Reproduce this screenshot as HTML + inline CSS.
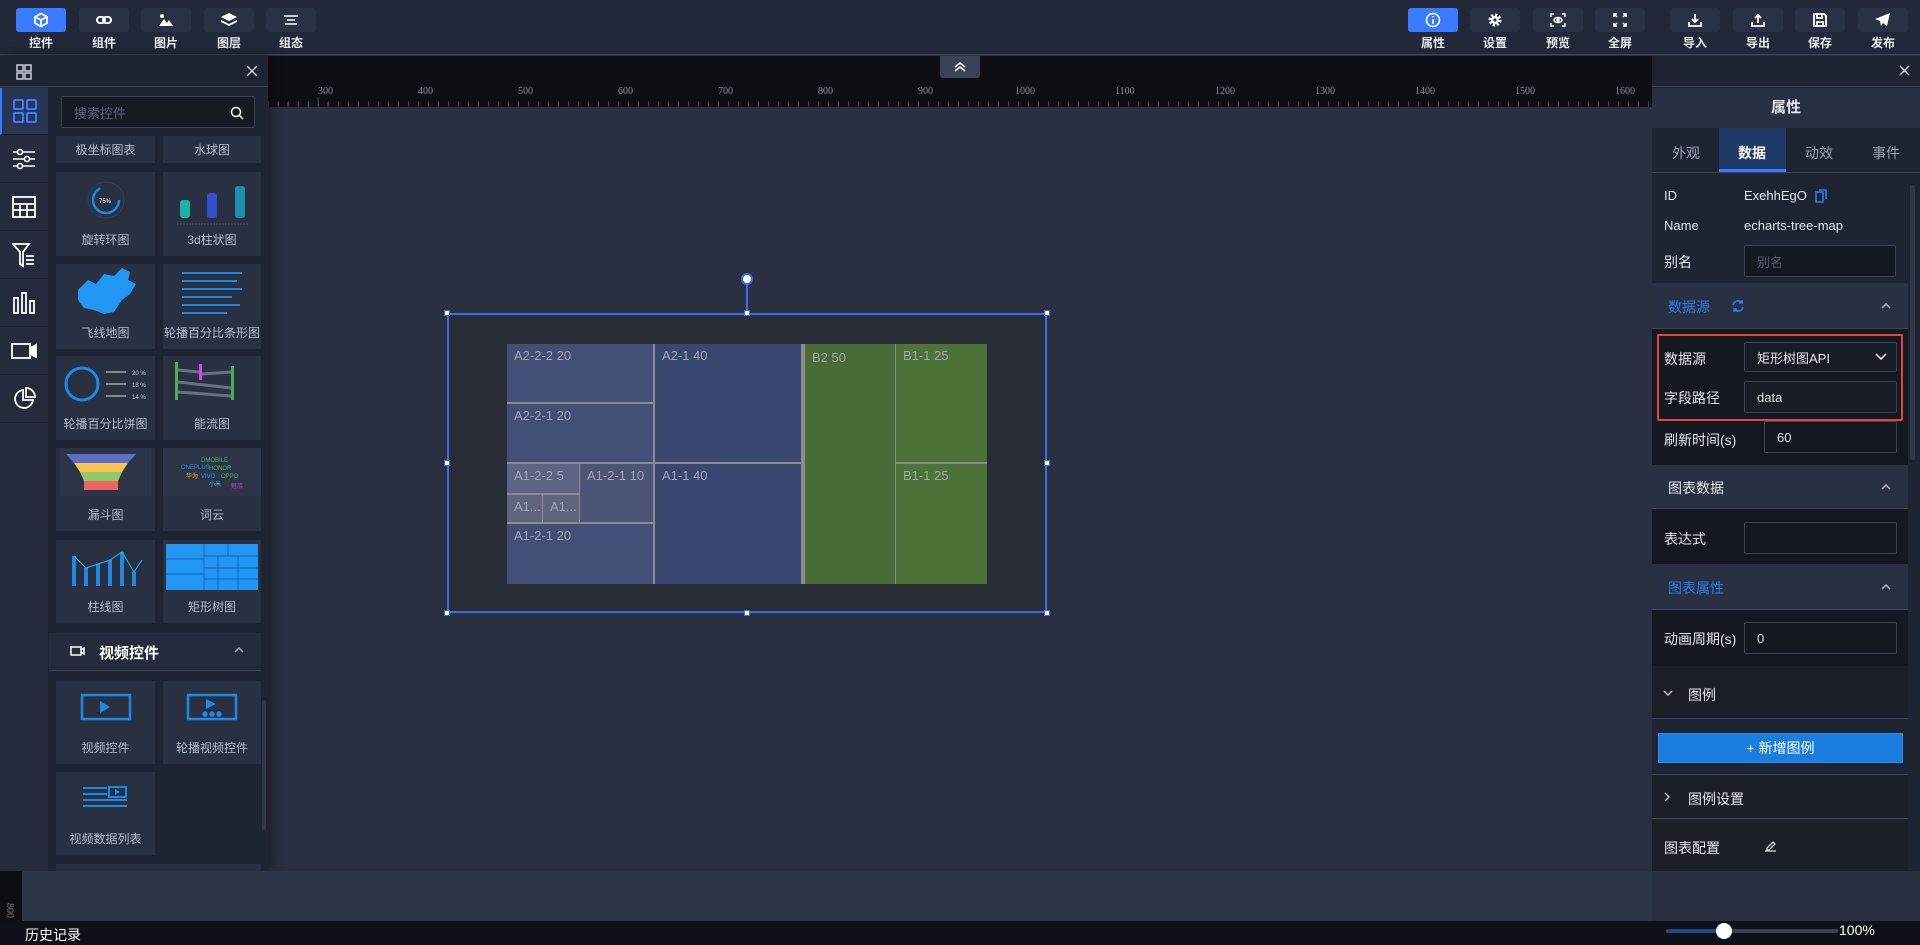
<!DOCTYPE html>
<html><head><meta charset="utf-8"><style>
*{margin:0;padding:0;box-sizing:border-box}
body{width:1920px;height:945px;overflow:hidden;background:#2a3040;font-family:"Liberation Sans","Noto Sans CJK SC",sans-serif;color:#e6e8ee;position:relative}
.a{position:absolute}
.tb{position:absolute;top:8px;width:50px;height:24px;background:#2a3142;border-radius:3px;display:flex;align-items:center;justify-content:center}
.tb.on{background:#3a7afe}
.tl{position:absolute;top:34px;width:50px;text-align:center;font-size:12px;color:#e8eaf0;font-weight:bold}
.ic{position:absolute;left:0;width:48px;height:47px;border-bottom:1px solid #1a1f2b;display:flex;align-items:center;justify-content:center}
.card{position:absolute;background:#283042;font-size:12px;color:#b4bccb;text-align:center}
.card span{position:absolute;left:0;right:0;bottom:8px}
.lab{position:absolute;font-size:13px;color:#e6e8ee}
.inp{position:absolute;background:#141821;border:1px solid #3a4254;border-radius:2px;font-size:13px;color:#e6e8ee;padding-left:12px;display:flex;align-items:center}
.sec{position:absolute;left:1652px;width:256px;background:#283042;border-bottom:1px solid #3a4254}
.tm{position:absolute;font-size:13px;color:#a3a7b0;padding:4px 0 0 7px;border:1px solid #8c8c8c;overflow:hidden;white-space:nowrap}
.h{position:absolute;width:6px;height:6px;background:#fff;border:1px solid #3a6cf0}
.rn{position:absolute;top:86px;font-size:10px;color:#8a8f99;font-family:"Liberation Serif",serif}
</style></head><body>
<!-- top bar -->
<div class="a" style="left:0;top:0;width:1920px;height:55px;background:#222838;border-bottom:1px solid #3a4254"></div>
<div class="tb on" style="left:16px"><svg width="16" height="16" viewBox="0 0 16 16" fill="none" stroke="#fff" stroke-width="1.8"><path d="M8 1.5 14 4.8v6.4L8 14.5 2 11.2V4.8z M2 4.8 8 8l6-3.2M8 8v6.5"/></svg></div><div class="tl" style="left:16px">控件</div>
<div class="tb" style="left:79px"><svg width="16" height="10" viewBox="0 0 16 10" fill="none" stroke="#fff" stroke-width="2"><rect x="1" y="2" width="8" height="6" rx="3"/><rect x="7" y="2" width="8" height="6" rx="3"/></svg></div><div class="tl" style="left:79px">组件</div>
<div class="tb" style="left:141px"><svg width="16" height="14" viewBox="0 0 16 14" fill="#fff"><circle cx="4" cy="3" r="2"/><path d="M1 13 6 6l3 4 2-3 4 6z"/></svg></div><div class="tl" style="left:141px">图片</div>
<div class="tb" style="left:204px"><svg width="16" height="14" viewBox="0 0 16 14" fill="#fff"><path d="M8 0 16 4 8 8 0 4z"/><path d="M0 7l8 4 8-4v2l-8 4-8-4z"/></svg></div><div class="tl" style="left:204px">图层</div>
<div class="tb" style="left:266px"><svg width="14" height="10" viewBox="0 0 14 10" stroke="#fff" stroke-width="1.6"><path d="M0 1h14M3 5h8M1 9h12"/></svg></div><div class="tl" style="left:266px">组态</div>
<div class="tb on" style="left:1408px"><svg width="16" height="16" viewBox="0 0 16 16" fill="none" stroke="#fff" stroke-width="1.6"><circle cx="8" cy="8" r="6.5"/><path d="M8 7v5M8 4v1.2"/></svg></div><div class="tl" style="left:1408px">属性</div>
<div class="tb" style="left:1470px"><svg width="14" height="14" viewBox="0 0 14 14"><circle cx="7" cy="7" r="5" fill="none" stroke="#fff" stroke-width="3" stroke-dasharray="2.2 1.7"/><circle cx="7" cy="7" r="4" fill="#fff"/><circle cx="7" cy="7" r="1.6" fill="#2a3142"/></svg></div><div class="tl" style="left:1470px">设置</div>
<div class="tb" style="left:1533px"><svg width="16" height="14" viewBox="0 0 16 14" fill="none" stroke="#fff" stroke-width="1.5"><path d="M1 4V1h3M12 1h3v3M15 10v3h-3M4 13H1v-3"/><ellipse cx="8" cy="7" rx="4" ry="2.5"/><circle cx="8" cy="7" r="1" fill="#fff"/></svg></div><div class="tl" style="left:1533px">预览</div>
<div class="tb" style="left:1595px"><svg width="14" height="14" viewBox="0 0 14 14" fill="none" stroke="#fff" stroke-width="1.5"><path d="M1 4V1h3M1 1l3 3M10 1h3v3M13 1l-3 3M13 10v3h-3M13 13l-3-3M4 13H1v-3M1 13l3-3"/></svg></div><div class="tl" style="left:1595px">全屏</div>
<div class="tb" style="left:1670px"><svg width="14" height="14" viewBox="0 0 14 14" fill="none" stroke="#fff" stroke-width="1.8"><path d="M7 1v8M4 6l3 3 3-3M1 9v4h12V9"/></svg></div><div class="tl" style="left:1670px">导入</div>
<div class="tb" style="left:1733px"><svg width="14" height="14" viewBox="0 0 14 14" fill="none" stroke="#fff" stroke-width="1.8"><path d="M7 10V2M4 5l3-3 3 3M1 9v4h12V9"/></svg></div><div class="tl" style="left:1733px">导出</div>
<div class="tb" style="left:1795px"><svg width="14" height="14" viewBox="0 0 14 14" fill="none" stroke="#fff" stroke-width="1.8"><path d="M1 1h10l2 2v10H1z M4 1v4h5V1M4 13V9h6v4"/></svg></div><div class="tl" style="left:1795px">保存</div>
<div class="tb" style="left:1858px"><svg width="16" height="14" viewBox="0 0 16 14" fill="#fff"><path d="M15 0 0 6l5 2 1 5 2-3 4 3z"/></svg></div><div class="tl" style="left:1858px">发布</div>

<!-- ruler -->
<div class="a" style="left:268px;top:56px;width:1384px;height:51px;background:#0d0f15"></div>
<svg class="a" style="left:268px;top:97px" width="1384" height="10"><g stroke="#444a55" stroke-width="1">
<path d="M0 5v5M10 5v5M20 5v5M30 5v5M40 5v5M50 0v10M60 5v5"/></g>
<rect x="0" y="4" width="1384" height="6" fill="url(#tk)"/><defs><pattern id="tk" width="10" height="6" patternUnits="userSpaceOnUse"><rect x="0" y="0" width="1" height="6" fill="#3a3f49"/></pattern></defs></svg>
<div class="rn" style="left:318px">300</div><div class="rn" style="left:418px">400</div><div class="rn" style="left:518px">500</div><div class="rn" style="left:618px">600</div><div class="rn" style="left:718px">700</div><div class="rn" style="left:818px">800</div><div class="rn" style="left:918px">900</div><div class="rn" style="left:1015px">1000</div><div class="rn" style="left:1115px">1100</div><div class="rn" style="left:1215px">1200</div><div class="rn" style="left:1315px">1300</div><div class="rn" style="left:1415px">1400</div><div class="rn" style="left:1515px">1500</div><div class="rn" style="left:1615px">1600</div>
<div class="a" style="left:940px;top:56px;width:40px;height:22px;background:#3a4254;border-radius:0 0 3px 3px;display:flex;align-items:center;justify-content:center"><svg width="12" height="10" fill="none" stroke="#fff" stroke-width="1.5"><path d="M1 5l5-4 5 4M1 9l5-4 5 4"/></svg></div>

<!-- canvas selection and treemap -->
<div class="a" style="left:447px;top:313px;width:600px;height:300px;background:#282c36;border:2px solid #3a6cf0"></div>
<div class="a" style="left:746px;top:279px;width:2px;height:34px;background:#3a6cf0"></div>
<div class="a" style="left:741px;top:273px;width:12px;height:12px;border-radius:50%;background:#fff;border:2px solid #3a6cf0"></div>
<div class="h" style="left:444px;top:310px"></div><div class="h" style="left:744px;top:310px"></div><div class="h" style="left:1044px;top:310px"></div>
<div class="h" style="left:444px;top:460px"></div><div class="h" style="left:1044px;top:460px"></div>
<div class="h" style="left:444px;top:610px"></div><div class="h" style="left:744px;top:610px"></div><div class="h" style="left:1044px;top:610px"></div>
<div class="tm" style="left:507px;top:344px;width:147px;height:60px;background:#434f76;border-width:0 1px 2px 0">A2-2-2 20</div>
<div class="tm" style="left:507px;top:404px;width:147px;height:60px;background:#434f76;border-width:0 1px 2px 0">A2-2-1 20</div>
<div class="tm" style="left:507px;top:464px;width:73px;height:31px;background:#5c6384;border-width:0 1px 2px 0">A1-2-2 5</div>
<div class="tm" style="left:507px;top:495px;width:36px;height:29px;background:#60657f;border-width:0 1px 2px 0">A1...</div>
<div class="tm" style="left:543px;top:495px;width:37px;height:29px;background:#60657f;border-width:0 1px 2px 0">A1...</div>
<div class="tm" style="left:580px;top:464px;width:74px;height:60px;background:#4c5477;border-width:0 1px 2px 0">A1-2-1 10</div>
<div class="tm" style="left:507px;top:524px;width:147px;height:60px;background:#434f76;border-width:0 1px 0 0">A1-2-1 20</div>
<div class="tm" style="left:654px;top:344px;width:147px;height:120px;background:#3a4770;border-width:0 0 2px 1px">A2-1 40</div>
<div class="tm" style="left:654px;top:464px;width:147px;height:120px;background:#3a4770;border-width:0 0 0 1px">A1-1 40</div>
<div class="a" style="left:801px;top:344px;width:4px;height:240px;background:#8c8c8c"></div>
<div class="tm" style="left:805px;top:344px;width:91px;height:240px;background:#496b35;border-width:0 1px 0 0;padding-top:6px">B2 50</div>
<div class="tm" style="left:896px;top:344px;width:91px;height:120px;background:#4e7339;border-width:0 0 2px 0">B1-1 25</div>
<div class="tm" style="left:896px;top:464px;width:91px;height:120px;background:#4e7339;border-width:0">B1-1 25</div>

<!-- left panel -->
<div class="a" style="left:0;top:56px;width:268px;height:815px;background:#1f2433;box-shadow:4px 0 12px rgba(0,0,0,.4)"></div>
<div class="a" style="left:0;top:56px;width:268px;height:31px;border-bottom:1px solid #3a4254"></div>
<svg class="a" style="left:16px;top:64px" width="16" height="16" fill="none" stroke="#d8dbe2" stroke-width="1.4"><rect x="1" y="1" width="6" height="6"/><rect x="9" y="1" width="6" height="6"/><rect x="1" y="9" width="6" height="6"/><rect x="9" y="9" width="6" height="6"/></svg>
<svg class="a" style="left:246px;top:65px" width="12" height="12" stroke="#d8dbe2" stroke-width="1.4"><path d="M1 1l10 10M11 1 1 11"/></svg>
<div class="a" style="left:0;top:87px;width:48px;height:784px;background:#252b3b"></div>
<div class="ic" style="top:88px;background:#2a3550;border-left:2px solid #3a7afe"><svg width="24" height="24" fill="none" stroke="#3a7afe" stroke-width="2"><rect x="1" y="1" width="9" height="9" rx="1"/><rect x="14" y="1" width="9" height="9" rx="1"/><rect x="1" y="14" width="9" height="9" rx="1"/><rect x="14" y="14" width="9" height="9" rx="1"/></svg></div>
<div class="ic" style="top:136px"><svg width="24" height="22" fill="none" stroke="#fff" stroke-width="1.6"><path d="M1 4h22M1 11h22M1 18h22"/><circle cx="8" cy="4" r="2.5" fill="#252b3b"/><circle cx="15" cy="11" r="2.5" fill="#252b3b"/><circle cx="8" cy="18" r="2.5" fill="#252b3b"/></svg></div>
<div class="ic" style="top:184px"><svg width="24" height="22" fill="none" stroke="#fff" stroke-width="1.8"><rect x="1" y="1" width="22" height="20"/><path d="M1 8h22M1 14h22M8 8v13M15 8v13"/></svg></div>
<div class="ic" style="top:232px"><svg width="24" height="26" fill="none" stroke="#fff" stroke-width="1.8"><path d="M1 2h16l-6 8v14l-3-2V10z M14 14h8M14 18h8M14 22h8"/></svg></div>
<div class="ic" style="top:280px"><svg width="24" height="22" fill="none" stroke="#fff" stroke-width="1.8"><rect x="2" y="6" width="4" height="15"/><rect x="10" y="1" width="4" height="20"/><rect x="18" y="9" width="4" height="12"/></svg></div>
<div class="ic" style="top:328px"><svg width="26" height="16" fill="none" stroke="#fff" stroke-width="1.8"><rect x="1" y="1" width="18" height="14"/><path d="M19 5l6-3v12l-6-3" fill="#fff"/></svg></div>
<div class="ic" style="top:376px"><svg width="24" height="24" fill="none" stroke="#fff" stroke-width="1.8"><path d="M11 3a9 9 0 1 0 10 10H11z M14 1v9h9a9 9 0 0 0-9-9z"/></svg></div>
<div class="a" style="left:48px;top:87px;width:220px;height:784px;background:#1f2433"></div>
<div class="inp" style="left:61px;top:96px;width:194px;height:32px;color:#5a6275;background:#161a24">搜索控件
<svg class="a" style="right:10px;top:9px" width="14" height="14" fill="none" stroke="#fff" stroke-width="1.5"><circle cx="6" cy="6" r="4.5"/><path d="M9.5 9.5l3.5 3.5"/></svg></div>
<div class="card" style="left:56px;top:136px;width:99px;height:27px"><span style="bottom:5px">极坐标图表</span></div>
<div class="card" style="left:163px;top:136px;width:98px;height:27px"><span style="bottom:5px">水球图</span></div>
<div class="card" style="left:56px;top:172px;width:99px;height:84px"><svg class="a" style="left:30px;top:8px" width="40" height="40" fill="none"><circle cx="20" cy="20" r="18" stroke="#344055"/><circle cx="20" cy="20" r="13" stroke="#1e88e5" stroke-width="2.5" stroke-dasharray="55 30"/><text x="13" y="23" font-size="6" fill="#fff" stroke="none">75%</text></svg><span>旋转环图</span></div>
<div class="card" style="left:163px;top:172px;width:98px;height:84px"><svg class="a" style="left:12px;top:8px" width="76" height="46"><rect x="5" y="20" width="10" height="18" rx="3" fill="#1ab3a0"/><rect x="32" y="13" width="10" height="25" rx="3" fill="#3450c8"/><rect x="60" y="6" width="10" height="32" rx="3" fill="#1c8fb0"/><path d="M2 44h72" stroke="#556" stroke-dasharray="2 1"/></svg><span>3d柱状图</span></div>
<div class="card" style="left:56px;top:264px;width:99px;height:85px"><svg class="a" style="left:18px;top:2px" width="66" height="56"><path d="M4 24 14 14 22 18 30 8 40 10 48 2 56 6 54 14 62 18 56 28 48 34 40 46 30 48 20 44 10 42 4 34z" fill="#2196f3"/></svg><span>飞线地图</span></div>
<div class="card" style="left:163px;top:264px;width:98px;height:85px"><svg class="a" style="left:4px;top:5px" width="90" height="50" stroke="#1e88e5" stroke-width="2"><path d="M15 4h60M15 12h55M15 20h60M15 28h50M15 36h58M15 44h45"/></svg><span>轮播百分比条形图</span></div>
<div class="card" style="left:56px;top:356px;width:99px;height:84px"><svg class="a" style="left:6px;top:6px" width="88" height="44"><circle cx="20" cy="22" r="16" fill="none" stroke="#1e88e5" stroke-width="3"/><path d="M44 10h20M44 22h20M44 34h20" stroke="#888" stroke-width="2"/><text x="70" y="13" font-size="6" fill="#ccc">20 %</text><text x="70" y="25" font-size="6" fill="#ccc">18 %</text><text x="70" y="37" font-size="6" fill="#ccc">14 %</text></svg><span>轮播百分比饼图</span></div>
<div class="card" style="left:163px;top:356px;width:98px;height:84px"><svg class="a" style="left:12px;top:6px" width="76" height="40"><rect x="0" y="0" width="3" height="38" fill="#4caf50"/><rect x="24" y="2" width="3" height="16" fill="#e040fb"/><rect x="56" y="4" width="3" height="34" fill="#4caf50"/><path d="M3 8 24 10M3 20 56 26M27 12 56 10M3 30 56 34" stroke="#6a7080" stroke-width="3" fill="none"/></svg><span>能流图</span></div>
<div class="card" style="left:56px;top:448px;width:99px;height:83px"><div class="a" style="left:4px;top:0;width:91px;height:48px;background:#2d3447"></div><svg class="a" style="left:10px;top:6px" width="80" height="40"><path d="M0 0h70l-8 9H8z" fill="#5b6ec8"/><path d="M8 9h54l-6 9H14z" fill="#f9c74f"/><path d="M14 18h42l-4 9H18z" fill="#90c96a"/><path d="M18 27h34v9H18z" fill="#ef6461"/></svg><span>漏斗图</span></div>
<div class="card" style="left:163px;top:448px;width:98px;height:83px"><div class="a" style="left:0;top:0;width:98px;height:48px;background:#2d3447"></div><svg class="a" style="left:8px;top:8px" width="82" height="40" font-size="6"><text x="30" y="6" fill="#4caf50">DMOBILE</text><text x="10" y="13" fill="#1e88e5">ONEPLUS</text><text x="38" y="14" fill="#4caf50">HONOR</text><text x="30" y="22" fill="#2196f3">VIVO</text><text x="50" y="22" fill="#4caf50">OPPO</text><text x="15" y="22" fill="#f9a825">华为</text><text x="38" y="30" fill="#26c6da">小米</text><text x="60" y="32" fill="#ab47bc">魅族</text></svg><span>词云</span></div>
<div class="card" style="left:56px;top:540px;width:99px;height:83px"><svg class="a" style="left:10px;top:6px" width="80" height="42"><g fill="#1e88e5"><rect x="6" y="10" width="4" height="30"/><rect x="18" y="22" width="4" height="18"/><rect x="30" y="18" width="4" height="22"/><rect x="42" y="14" width="4" height="26"/><rect x="54" y="6" width="4" height="34"/><rect x="66" y="26" width="4" height="14"/></g><path d="M8 10 20 22 32 18 44 14 56 6 68 26 76 14" stroke="#29b6f6" fill="none"/></svg><span>柱线图</span></div>
<div class="card" style="left:163px;top:540px;width:98px;height:83px"><svg class="a" style="left:3px;top:4px" width="92" height="46"><rect width="92" height="46" fill="#2196f3"/><path d="M38 0v46M0 15h38M0 30h38M38 12h54M62 0v12M38 24h54M52 12v34M72 12v34M38 35h54" stroke="#1565c0"/></svg><span>矩形树图</span></div>
<div class="a" style="left:49px;top:633px;width:212px;height:38px;background:#252b3b;border-bottom:1px solid #3a4254"></div>
<svg class="a" style="left:70px;top:646px" width="15" height="10" fill="none" stroke="#fff" stroke-width="1.5"><rect x="1" y="1" width="10" height="8"/><path d="M11 4l3-2v6l-3-2"/></svg>
<div class="a" style="left:99px;top:642px;font-size:15px;font-weight:bold;color:#fff">视频控件</div>
<svg class="a" style="left:234px;top:647px" width="10" height="6" fill="none" stroke="#aaa" stroke-width="1.5"><path d="M1 5l4-4 4 4"/></svg>
<div class="card" style="left:56px;top:681px;width:99px;height:83px"><svg class="a" style="left:24px;top:12px" width="52" height="36" fill="none" stroke="#1e88e5" stroke-width="2.5"><rect x="2" y="2" width="48" height="24"/><path d="M20 8v12l10-6z" fill="#1e88e5" stroke="none"/></svg><span>视频控件</span></div>
<div class="card" style="left:163px;top:681px;width:98px;height:83px"><svg class="a" style="left:23px;top:12px" width="52" height="36" fill="none" stroke="#1e88e5" stroke-width="2.5"><rect x="2" y="2" width="48" height="24"/><path d="M20 6v10l10-5z" fill="#1e88e5" stroke="none"/><circle cx="19" cy="21" r="1.5" fill="#1e88e5"/><circle cx="26" cy="21" r="1.5" fill="#1e88e5"/><circle cx="33" cy="21" r="1.5" fill="#1e88e5"/></svg><span>轮播视频控件</span></div>
<div class="card" style="left:56px;top:772px;width:99px;height:83px"><svg class="a" style="left:26px;top:14px" width="46" height="24" fill="none" stroke="#1e88e5" stroke-width="2"><path d="M1 2h24M1 8h24M1 14h44M1 20h44"/><rect x="27" y="1" width="17" height="10"/><path d="M33 3v6l5-3z" fill="#1e88e5" stroke="none"/></svg><span>视频数据列表</span></div>
<div class="a" style="left:56px;top:864px;width:205px;height:7px;background:#283042"></div>
<div class="a" style="left:262px;top:700px;width:4px;height:130px;background:#2f3646;border-radius:2px"></div>

<!-- bottom -->
<div class="a" style="left:0;top:871px;width:22px;height:50px;background:#0d0f15"></div>
<div class="a" style="left:2px;top:905px;font-size:10px;color:#777;transform:rotate(90deg);font-family:'Liberation Serif',serif">800</div>
<div class="a" style="left:22px;top:871px;width:1630px;height:50px;background:#2d3445"></div>
<div class="a" style="left:0;top:921px;width:1920px;height:24px;background:#0f1118"></div>
<div class="a" style="left:25px;top:925px;font-size:14px;color:#fff">历史记录</div>
<div class="a" style="left:1666px;top:929px;width:172px;height:4px;background:#3a4254;border-radius:2px"></div>
<div class="a" style="left:1666px;top:929px;width:58px;height:4px;background:#1a4a80;border-radius:2px"></div>
<div class="a" style="left:1716px;top:923px;width:16px;height:16px;border-radius:50%;background:#fff"></div>
<div class="a" style="left:1839px;top:922px;font-size:14px;color:#fff">100%</div>

<!-- right panel -->
<div class="a" style="left:1652px;top:56px;width:268px;height:815px;background:#1f2433"></div>
<div class="a" style="left:1652px;top:56px;width:268px;height:31px;border-bottom:1px solid #3a4254"></div>
<svg class="a" style="left:1899px;top:65px" width="11" height="11" stroke="#d8dbe2" stroke-width="1.4"><path d="M1 1l9 9M10 1 1 10"/></svg>
<div class="a" style="left:1652px;top:88px;width:268px;height:40px;background:#283042;text-align:center;font-size:15px;font-weight:bold;line-height:40px">属性</div>
<div class="a" style="left:1652px;top:128px;width:268px;height:45px;background:#1f2433;border-bottom:1px solid #3a4254"></div>
<div class="a" style="left:1719px;top:128px;width:67px;height:44px;background:#1f3a66;border-bottom:3px solid #3a7afe"></div>
<div class="lab" style="left:1672px;top:143px;font-size:14px;color:#9aa2b2">外观</div>
<div class="lab" style="left:1738px;top:143px;font-size:14px;font-weight:bold;color:#fff">数据</div>
<div class="lab" style="left:1805px;top:143px;font-size:14px;color:#9aa2b2">动效</div>
<div class="lab" style="left:1872px;top:143px;font-size:14px;color:#9aa2b2">事件</div>
<div class="a" style="left:1652px;top:173px;width:256px;height:110px;background:#1f2433"></div>
<div class="lab" style="left:1664px;top:188px">ID</div><div class="lab" style="left:1744px;top:188px">ExehhEgO</div>
<svg class="a" style="left:1815px;top:189px" width="12" height="14" fill="none" stroke="#2b7de9" stroke-width="1.6"><rect x="1" y="3" width="7" height="10"/><path d="M4 1h7v9"/></svg>
<div class="lab" style="left:1664px;top:218px">Name</div><div class="lab" style="left:1744px;top:218px">echarts-tree-map</div>
<div class="lab" style="left:1664px;top:252px;font-size:14px">别名</div>
<div class="inp" style="left:1744px;top:245px;width:152px;height:32px;color:#555c6c">别名</div>
<div class="sec" style="top:283px;height:46px"></div>
<div class="lab" style="left:1668px;top:297px;font-size:14px;color:#2b7de9">数据源</div>
<svg class="a" style="left:1731px;top:299px" width="14" height="14" fill="none" stroke="#2b7de9" stroke-width="1.6"><path d="M2 6a5 5 0 0 1 9-2M12 8a5 5 0 0 1-9 2M11 1v3H8M3 13v-3h3"/></svg>
<svg class="a" style="left:1881px;top:303px" width="10" height="6" fill="none" stroke="#aaa" stroke-width="1.6"><path d="M1 5l4-4 4 4"/></svg>
<div class="a" style="left:1652px;top:329px;width:256px;height:136px;background:#141821"></div>
<div class="a" style="left:1657px;top:334px;width:246px;height:87px;border:2px solid #e5463b;border-radius:2px"></div>
<div class="lab" style="left:1664px;top:349px;font-size:14px">数据源</div>
<div class="inp" style="left:1744px;top:342px;width:153px;height:30px;background:#181c26">矩形树图API<svg class="a" style="left:130px;top:10px" width="12" height="8" fill="none" stroke="#fff" stroke-width="1.5"><path d="M1 1l5 5 5-5"/></svg></div>
<div class="lab" style="left:1664px;top:388px;font-size:14px">字段路径</div>
<div class="inp" style="left:1744px;top:381px;width:153px;height:32px;background:#181c26">data</div>
<div class="lab" style="left:1664px;top:430px;font-size:14px">刷新时间(s)</div>
<div class="inp" style="left:1764px;top:421px;width:133px;height:32px">60</div>
<div class="sec" style="top:465px;height:44px"></div>
<div class="lab" style="left:1668px;top:478px;font-size:14px">图表数据</div>
<svg class="a" style="left:1881px;top:484px" width="10" height="6" fill="none" stroke="#aaa" stroke-width="1.6"><path d="M1 5l4-4 4 4"/></svg>
<div class="a" style="left:1652px;top:509px;width:256px;height:55px;background:#141821"></div>
<div class="lab" style="left:1664px;top:529px;font-size:14px">表达式</div>
<div class="inp" style="left:1744px;top:522px;width:153px;height:32px"></div>
<div class="sec" style="top:564px;height:46px"></div>
<div class="lab" style="left:1668px;top:578px;font-size:14px;color:#2b7de9">图表属性</div>
<svg class="a" style="left:1881px;top:584px" width="10" height="6" fill="none" stroke="#aaa" stroke-width="1.6"><path d="M1 5l4-4 4 4"/></svg>
<div class="a" style="left:1652px;top:610px;width:256px;height:56px;background:#141821"></div>
<div class="lab" style="left:1664px;top:629px;font-size:14px">动画周期(s)</div>
<div class="inp" style="left:1744px;top:622px;width:153px;height:32px">0</div>
<div class="a" style="left:1652px;top:666px;width:256px;height:53px;background:#1b1f28;border-bottom:1px solid #3a4254"></div>
<svg class="a" style="left:1663px;top:690px" width="10" height="6" fill="none" stroke="#ccc" stroke-width="1.4"><path d="M1 1l4 4 4-4"/></svg>
<div class="lab" style="left:1688px;top:685px;font-size:14px">图例</div>
<div class="a" style="left:1652px;top:719px;width:256px;height:56px;background:#1f2433;border-bottom:1px solid #3a4254"></div>
<div class="a" style="left:1658px;top:733px;width:245px;height:30px;background:#1a7ee0;border:1px solid #2b8cf0;text-align:center;line-height:28px;font-size:14px;color:#fff">+ 新增图例</div>
<div class="a" style="left:1652px;top:776px;width:256px;height:43px;background:#1b1f28;border-bottom:1px solid #3a4254"></div>
<svg class="a" style="left:1664px;top:792px" width="6" height="10" fill="none" stroke="#ccc" stroke-width="1.4"><path d="M1 1l4 4-4 4"/></svg>
<div class="lab" style="left:1688px;top:789px;font-size:14px">图例设置</div>
<div class="a" style="left:1652px;top:820px;width:256px;height:51px;background:#1b1f28"></div>
<div class="lab" style="left:1664px;top:838px;font-size:14px">图表配置</div>
<svg class="a" style="left:1764px;top:839px" width="13" height="13" fill="none" stroke="#ddd" stroke-width="1.3"><path d="M3 9l6-6 2 2-6 6H3zM1 12h11"/></svg>
<div class="a" style="left:1910px;top:185px;width:5px;height:275px;background:#2f3646;border-radius:2px"></div>
</body></html>
